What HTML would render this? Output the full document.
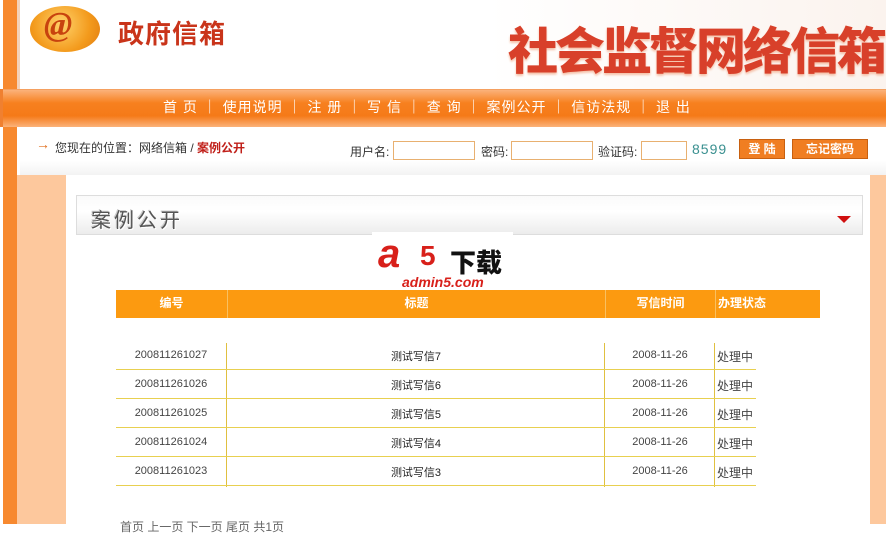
<!DOCTYPE html>
<html><head><meta charset="utf-8"><style>
*{margin:0;padding:0;box-sizing:border-box}
body{width:886px;height:524px;overflow:hidden;background:#fff;font-family:"Liberation Sans","Noto Sans CJK SC",sans-serif;font-size:12px;color:#333;position:relative}
.a{position:absolute}
</style></head><body>
<div class="a" style="left:0;top:0;width:886px;height:89px;background:linear-gradient(90deg,#fff 0,#fff 55%,#fbf3ee 100%)"></div>
<div class="a" style="left:3px;top:0;width:14px;height:524px;background:#f7892f"></div>
<div class="a" style="left:17px;top:0;width:3px;height:89px;background:#f3d2bb"></div>
<div class="a" style="left:30px;top:6px;width:70px;height:46px;border-radius:50%;background:radial-gradient(circle at 45% 40%,#ffd26a,#f39a1c 60%,#e07a10);"></div>
<div class="a" style="left:44px;top:6px;font:italic bold 34px 'Liberation Serif',serif;color:#c8430e">@</div>
<div class="a" style="left:118px;top:14px;font-size:26px;font-weight:bold;color:#c9341a;letter-spacing:1px">政府信箱</div>
<div class="a" style="left:508px;top:12px;font-size:50px;font-weight:900;color:#d8402a;letter-spacing:-3px;white-space:nowrap;text-shadow:0 2px 2px #f5c0a8">社会监督网络信箱</div>
<div class="a" style="left:0;top:89px;width:886px;height:38px;background:linear-gradient(#fbb27a,#f7801f 35%,#f57a18 70%,#fbb27a);border-top:1px solid #f5a060"></div>
<div class="a" style="left:0;top:89px;width:3px;height:38px;background:#f08030"></div>
<div class="a" style="left:163px;top:97px;font-size:14px;color:#fff;white-space:nowrap;word-spacing:0;letter-spacing:1px">首 页 ｜ 使用说明 ｜ 注 册 ｜ 写 信 ｜ 查 询 ｜ 案例公开 ｜ 信访法规 ｜ 退 出</div>
<div class="a" style="left:20px;top:127px;width:866px;height:48px;background:linear-gradient(#fff,#fff 70%,#f3f3f3)"></div>
<div class="a" style="left:17px;top:175px;width:49px;height:349px;background:#fdc89d"></div>
<div class="a" style="left:870px;top:175px;width:16px;height:349px;background:#fdc89d"></div>
<div class="a" style="left:66px;top:175px;width:804px;height:349px;background:#fff"></div>
<div class="a" style="left:36px;top:136px;color:#e07020;font-size:14px;font-weight:bold">→</div>
<div class="a" style="left:55px;top:139px;white-space:nowrap">您现在的位置：网络信箱 / <b style="color:#c0201a">案例公开</b></div>
<div class="a" style="left:350px;top:143px;white-space:nowrap">用户名:</div>
<div class="a" style="left:393px;top:141px;width:82px;height:19px;border:1px solid #e8b070"></div>
<div class="a" style="left:481px;top:143px">密码:</div>
<div class="a" style="left:511px;top:141px;width:82px;height:19px;border:1px solid #e8b070"></div>
<div class="a" style="left:598px;top:143px">验证码:</div>
<div class="a" style="left:641px;top:141px;width:46px;height:19px;border:1px solid #e8b070"></div>
<div class="a" style="left:692px;top:141px;font-size:14px;color:#3a9090;letter-spacing:1px">8599</div>
<div class="a" style="left:739px;top:139px;width:46px;height:20px;background:#f07e22;border:1px solid #c86010;color:#fff;font-weight:bold;text-align:center;line-height:18px">登 陆</div>
<div class="a" style="left:792px;top:139px;width:76px;height:20px;background:#f07e22;border:1px solid #c86010;color:#fff;font-weight:bold;text-align:center;line-height:18px">忘记密码</div>
<div class="a" style="left:76px;top:195px;width:787px;height:40px;border:1px solid #ddd;background:linear-gradient(#fafafa,#fff 40%,#ececec)"></div>
<div class="a" style="left:91px;top:204px;font-size:20px;color:#555;letter-spacing:3px;text-shadow:1px 1px 0 #fff,-1px -1px 0 #ccc">案例公开</div>
<div class="a" style="left:837px;top:216px;width:0;height:0;border-left:7px solid transparent;border-right:7px solid transparent;border-top:7px solid #d01010"></div>
<div class="a" style="left:372px;top:232px;width:141px;height:59px;background:#fff"></div>
<div class="a" style="left:378px;top:232px;font:italic bold 40px 'Liberation Sans',sans-serif;color:#d8201a">a</div>
<div class="a" style="left:420px;top:240px;font-size:28px;font-weight:bold;color:#d8201a">5</div>
<div class="a" style="left:450px;top:243px;font-size:26px;font-weight:900;color:#111">下载</div>
<div class="a" style="left:402px;top:274px;font:bold italic 14px 'Liberation Sans',sans-serif;color:#d8201a">admin5.com</div>
<div class="a" style="left:116px;top:290px;width:704px;height:28px;background:#fc9a10;color:#fff;font-weight:bold;font-size:12px;line-height:26px">
<span class="a" style="left:0;width:111px;text-align:center">编号</span>
<span class="a" style="left:111px;width:378px;text-align:center;border-left:1px solid #f9c060;height:28px">标题</span>
<span class="a" style="left:489px;width:110px;text-align:center;border-left:1px solid #f9c060;height:28px">写信时间</span>
<span class="a" style="left:599px;width:105px;border-left:1px solid #f9c060;height:28px;padding-left:2px">办理状态</span>
</div>
<div class="a" style="left:226px;top:343px;width:1px;height:144px;background:#e0c040"></div>
<div class="a" style="left:604px;top:343px;width:1px;height:144px;background:#e0c040"></div>
<div class="a" style="left:714px;top:343px;width:1px;height:144px;background:#e0c040"></div>
<div class="a" style="left:116px;top:341px;width:640px;font-size:11px;color:#444">
<div style="position:relative;height:29px;border-bottom:1px solid #e8d050"><span class="a" style="left:0;width:110px;text-align:center;top:8px">200811261027</span><span class="a" style="left:111px;width:378px;text-align:center;top:7px;color:#222">测试写信7</span><span class="a" style="left:489px;width:110px;text-align:center;top:8px">2008-11-26</span><span class="a" style="left:601px;top:7px;font-size:12px">处理中</span></div>
<div style="position:relative;height:29px;border-bottom:1px solid #e8d050"><span class="a" style="left:0;width:110px;text-align:center;top:8px">200811261026</span><span class="a" style="left:111px;width:378px;text-align:center;top:7px;color:#222">测试写信6</span><span class="a" style="left:489px;width:110px;text-align:center;top:8px">2008-11-26</span><span class="a" style="left:601px;top:7px;font-size:12px">处理中</span></div>
<div style="position:relative;height:29px;border-bottom:1px solid #e8d050"><span class="a" style="left:0;width:110px;text-align:center;top:8px">200811261025</span><span class="a" style="left:111px;width:378px;text-align:center;top:7px;color:#222">测试写信5</span><span class="a" style="left:489px;width:110px;text-align:center;top:8px">2008-11-26</span><span class="a" style="left:601px;top:7px;font-size:12px">处理中</span></div>
<div style="position:relative;height:29px;border-bottom:1px solid #e8d050"><span class="a" style="left:0;width:110px;text-align:center;top:8px">200811261024</span><span class="a" style="left:111px;width:378px;text-align:center;top:7px;color:#222">测试写信4</span><span class="a" style="left:489px;width:110px;text-align:center;top:8px">2008-11-26</span><span class="a" style="left:601px;top:7px;font-size:12px">处理中</span></div>
<div style="position:relative;height:29px;border-bottom:1px solid #e8d050"><span class="a" style="left:0;width:110px;text-align:center;top:8px">200811261023</span><span class="a" style="left:111px;width:378px;text-align:center;top:7px;color:#222">测试写信3</span><span class="a" style="left:489px;width:110px;text-align:center;top:8px">2008-11-26</span><span class="a" style="left:601px;top:7px;font-size:12px">处理中</span></div>
</div>
<div class="a" style="left:120px;top:518px;font-size:12px;color:#666;white-space:nowrap">首页 上一页 下一页 尾页 共1页</div>
</body></html>
